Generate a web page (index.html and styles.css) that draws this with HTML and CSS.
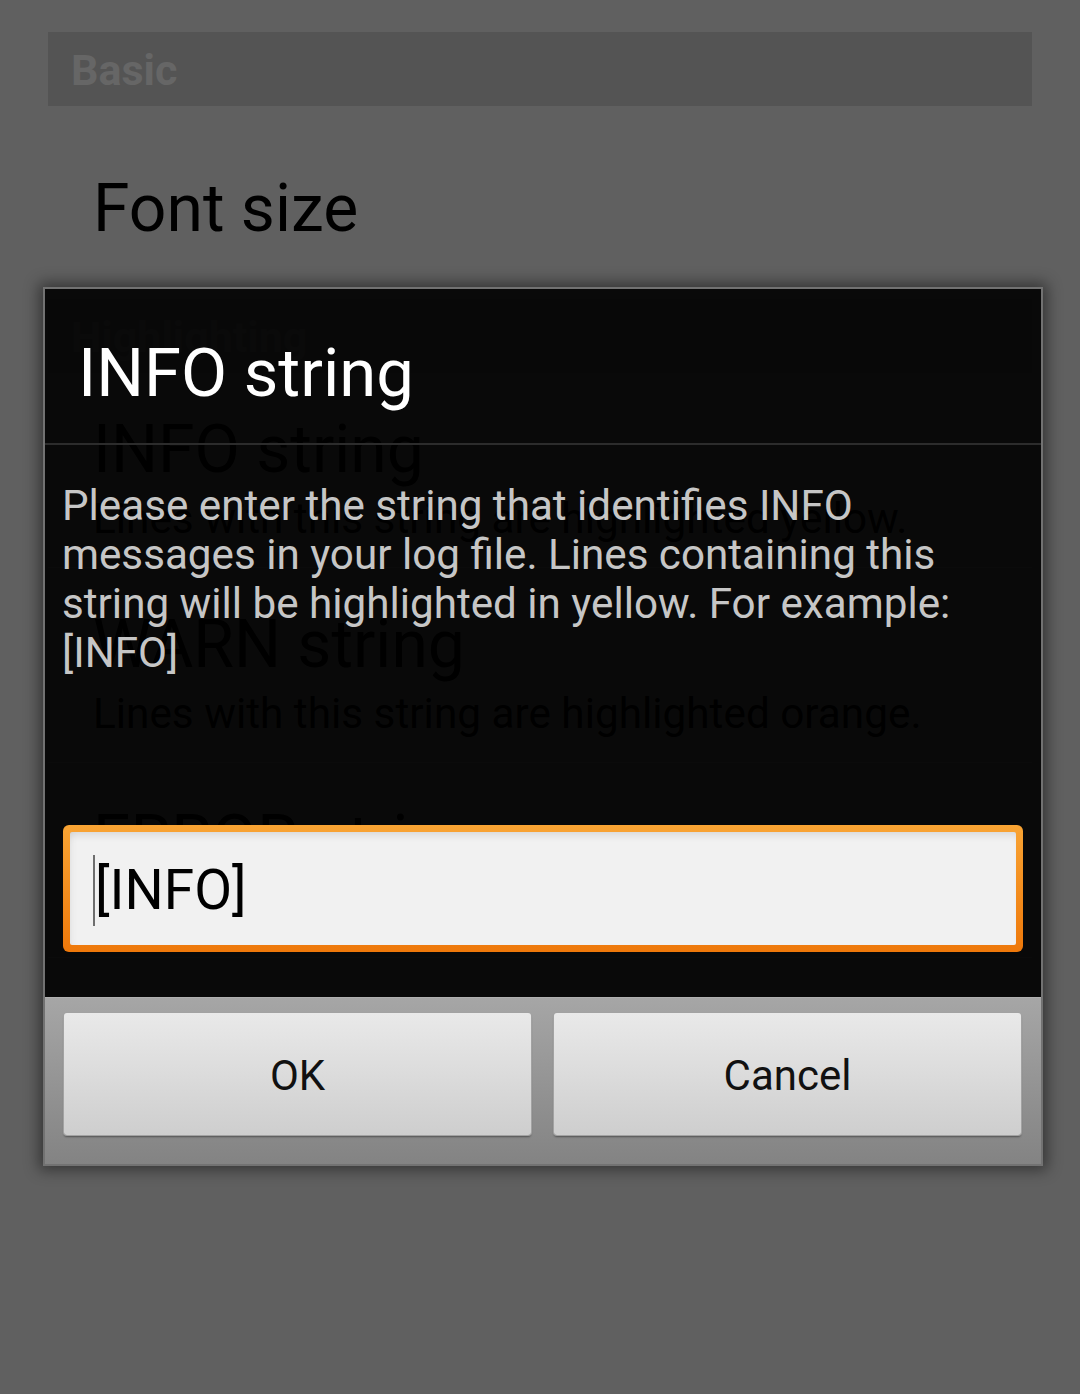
FILE: index.html
```html
<!DOCTYPE html>
<html lang="en">
<head>
<meta charset="utf-8">
<title>INFO string</title>
<link rel="stylesheet" href="styles.css">
</head>
<body>
  <div class="prefs">
    <div class="category">Basic</div>
    <div class="pref pref-single">
      <div class="pref-title">Font size</div>
    </div>
    <div class="category">Highlighting</div>
    <div class="pref">
      <div class="pref-title">INFO string</div>
      <div class="pref-summary">Lines with this string are highlighted yellow.</div>
    </div>
    <div class="pref">
      <div class="pref-title">WARN string</div>
      <div class="pref-summary">Lines with this string are highlighted orange.</div>
    </div>
    <div class="pref">
      <div class="pref-title">ERROR string</div>
      <div class="pref-summary">Lines with this string are highlighted red.</div>
    </div>
  </div>

  <div class="dialog">
    <div class="dialog-title">INFO string</div>
    <div class="dialog-divider"></div>
    <div class="dialog-body">
      <p class="dialog-message">Please enter the string that identifies INFO messages in your log file. Lines containing this string will be highlighted in yellow. For example: [INFO]</p>
      <div class="field">
        <div class="field-inner">
          <span class="cursor"></span><span class="field-text">[INFO]</span>
        </div>
      </div>
    </div>
    <div class="dialog-buttons">
      <div class="btn">OK</div>
      <div class="btn">Cancel</div>
    </div>
  </div>
</body>
</html>
```
FILE: styles.css
```css
* { box-sizing: border-box; }

html, body {
  margin: 0;
  padding: 0;
}

body {
  width: 1080px;
  height: 1394px;
  background: #606060;
  font-family: Roboto, "Liberation Sans", sans-serif;
  position: relative;
  overflow: hidden;
}

/* underlying preference list */
.prefs {
  padding-top: 32px;
}

.category {
  margin: 0 48px;
  height: 74px;
  background: #545454;
  color: #666666;
  font-weight: 700;
  font-size: 43px;
  line-height: 74px;
  padding: 1px 0 0 23px;
}

.pref {
  margin: 0 48px;
  height: 195px;
  padding: 39px 0 0 45px;
  border-bottom: 1px solid #707070;
}

.pref-single {
  height: 193px;
  padding-top: 65px;
  border-bottom: none;
}

.pref-title {
  font-size: 66px;
  line-height: 76px;
  color: #000;
  white-space: nowrap;
}

.pref-summary {
  margin-top: 6px;
  font-size: 42.3px;
  line-height: 50px;
  color: #000;
  white-space: nowrap;
}

/* dialog overlay */
.dialog {
  position: absolute;
  left: 43px;
  top: 287px;
  width: 1000px;
  height: 879px;
  border: 2px solid #727272;
  box-shadow: 0 0 14px 4px rgba(0, 0, 0, 0.45);
  display: flex;
  flex-direction: column;
}

.dialog-title {
  height: 154px;
  padding: 44px 0 0 33px;
  font-size: 67px;
  line-height: 80px;
  color: #ffffff;
  background: rgba(0, 0, 0, 0.9);
}

.dialog-divider {
  height: 2px;
  background: #2c2c2c;
}

.dialog-body {
  flex: 1;
  background: rgba(0, 0, 0, 0.9);
  padding: 36px 16px 45px 17px;
  display: flex;
  flex-direction: column;
}

.dialog-message {
  margin: 0;
  font-size: 42.2px;
  line-height: 49px;
  color: #c6c6c6;
}

.field {
  margin-top: auto;
  margin-left: 1px;
  width: 960px;
  height: 127px;
  padding: 7px;
  border-radius: 6px;
  background: linear-gradient(#f9a434, #ee780a);
}

.field-inner {
  height: 100%;
  border-radius: 2px;
  background: #f1f1f1;
  box-shadow: inset 0 8px 10px -6px rgba(0, 0, 0, 0.12), inset 6px 0 8px -6px rgba(0, 0, 0, 0.08);
  display: flex;
  align-items: center;
  padding: 4px 0 0 23px;
}

.cursor {
  display: inline-block;
  width: 2px;
  height: 71px;
  background: #6e6e6e;
}

.field-text {
  font-size: 55px;
  line-height: 71px;
  color: #000;
}

.dialog-buttons {
  height: 167px;
  background: linear-gradient(#a6a6a6, #838383);
  border-top: 1px solid #b0b0b0;
  display: flex;
  gap: 23px;
  padding: 15px 19px 0 19px;
}

.btn {
  width: 467px;
  height: 122px;
  border-radius: 3px;
  background: linear-gradient(#e9e9e9, #cecece);
  box-shadow: 0 0 0 1px #a2a2a2, 0 2px 2px rgba(0, 0, 0, 0.4);
  display: flex;
  align-items: center;
  justify-content: center;
  font-size: 42px;
  color: #111111;
  padding-top: 2px;
}
```
